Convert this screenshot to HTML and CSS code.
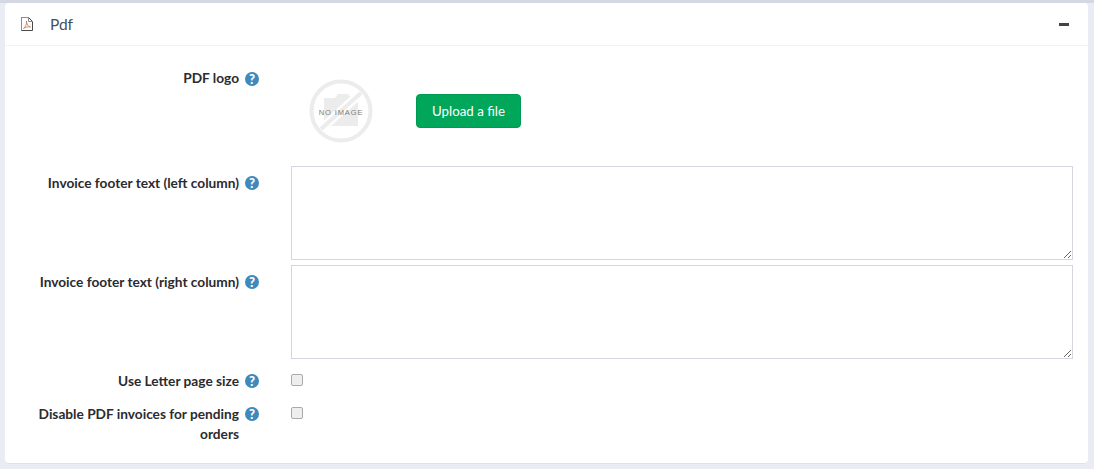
FILE: index.html
```html
<!DOCTYPE html>
<html>
<head>
	<link rel="stylesheet" href="styles.css">
</head>
<body>
	<div class="panel">
		<div class="panel-head">
			<svg class="pdf-icon" width="14" height="15" viewBox="0 0 14 15">
				<path d="M1.500 .5H8.500L12.500 4.500V13.500H1.500Z" fill="none" stroke="#4a4a4a"/>
				<path d="M1.500 .5H8.500M1.500 .5V13" fill="none" stroke="#b9824f"/>
				<path d="M8.500 .5V4.500H12.500" fill="none" stroke="#8a8a8a"/>
				<path d="M3.500 11.500C5.500 10 7 6.500 6.500 4C6.500 7 8 9.500 10.500 10C8 9.500 5.500 10 3.500 11.500Z" fill="none" stroke="#c9764a" stroke-width=".8"/>
			</svg>
			<span class="panel-title">Pdf</span>
			<span class="collapse-btn"></span>
		</div>
		<div class="panel-body">
			<div class="row row-logo">
				<label class="row-label">PDF logo</label>
				<span class="help">?</span>
				<div class="logo-control">
					<svg class="no-image" width="64" height="64" viewBox="0 0 64 64">
						<circle cx="32" cy="32" r="29.500" fill="none" stroke="#ececec" stroke-width="4"/>
						<path d="M15 19H26L29 15H39L42 19H49V47H15Z" fill="#ececec"/>
						<path d="M12 50L52 14" stroke="#fff" stroke-width="9"/>
						<path d="M12 50L52 14" stroke="#ececec" stroke-width="4"/>
						<text x="32" y="35.500" text-anchor="middle" class="no-image-text">NO IMAGE</text>
					</svg>
					<button class="upload-btn">Upload a file</button>
				</div>
			</div>
			<div class="row row-area">
				<label class="row-label">Invoice footer text (left column)</label>
				<span class="help">?</span>
				<textarea class="area"></textarea>
			</div>
			<div class="row row-area">
				<label class="row-label">Invoice footer text (right column)</label>
				<span class="help">?</span>
				<textarea class="area"></textarea>
			</div>
			<div class="row row-check">
				<label class="row-label">Use Letter page size</label>
				<span class="help">?</span>
				<span class="check"></span>
			</div>
			<div class="row row-check">
				<label class="row-label">Disable PDF invoices for pending orders</label>
				<span class="help">?</span>
				<span class="check"></span>
			</div>
		</div>
	</div>
</body>
</html>
```

FILE: styles.css
```css
body {margin:0;background-color:#e9edf3;border-top:3px solid #d3d8e3;font-family:"Lato","Noto Sans",sans-serif;font-size:14px;color:#333;}
.panel {background-color:#fff;margin:0 6px 5px 5px;border-radius:4px;border-bottom:1px solid #dde1e8;height:461px;box-sizing:border-box;}
.panel-head {display:flex;align-items:center;height:43px;border-bottom:1px solid #f1f2f4;padding:0 19px 0 15px;box-sizing:border-box;}
.pdf-icon {margin-right:16px;}
.panel-title {font-size:15.500px;color:#44505e;flex:1;}
.collapse-btn {width:10px;height:3px;background-color:#444;}
.panel-body {padding-top:22px;}
.row {display:grid;grid-template-columns:234px 14px 1fr;column-gap:6px;padding-right:15px;}
.row-label {text-align:right;font-weight:bold;font-size:13.700px;line-height:20px;color:#2b2b30;}
.help {width:14px;height:14px;border-radius:50%;background-color:#3f8abb;color:#fff;font-size:13px;font-weight:900;line-height:14px;text-align:center;margin-top:4px;}
.area {margin-left:26px;height:94px;box-sizing:border-box;border:1px solid #d3d6de;border-radius:0;padding:0;display:block;width:782px;}
.row-logo {height:98px;}
.row-area {height:99px;}
.row-area .row-label {margin-top:7px;}
.row-area .help {margin-top:10px;}
.row-check {height:26px;padding-top:7px;}
.row-check .help {margin-top:3px;}
.row-check .check {margin-left:26px;margin-top:3px;width:12px;height:12px;box-sizing:border-box;border:1px solid #aaa;border-radius:2px;background-color:#eee;}
.logo-control {display:flex;align-items:center;margin-left:44px;padding-top:9px;height:68px;}
.no-image-text {font-family:"Liberation Sans",sans-serif;font-size:7.500px;letter-spacing:.9px;fill:#7c7c7c;}
.upload-btn {margin-left:43px;background-color:#00a65a;color:#fff;border:1px solid #009a53;border-radius:4px;width:105px;height:34px;font-family:"Lato","Noto Sans",sans-serif;font-size:13.300px;padding:0;}
```
